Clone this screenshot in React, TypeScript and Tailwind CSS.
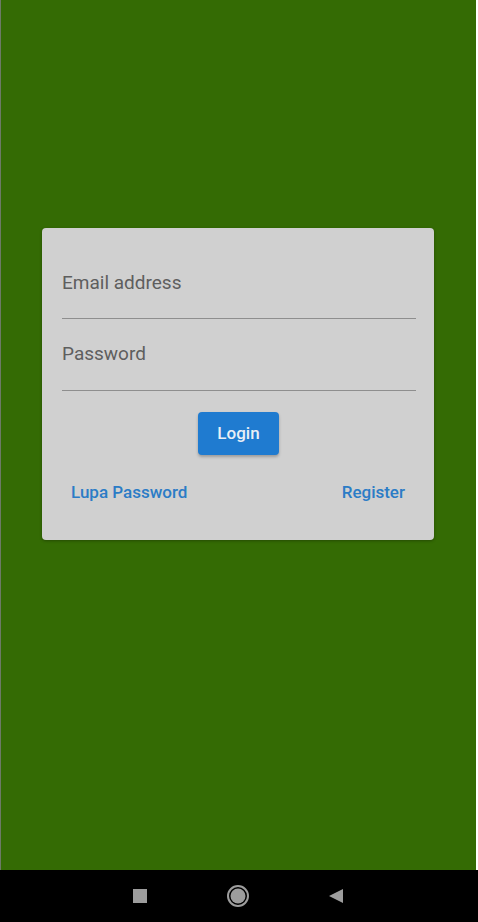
export default function App() {
  return (
    <div className="flex h-[922px] w-[478px] flex-col bg-white font-['Roboto',sans-serif]">
      <div className="mr-[2px] flex flex-1 items-start border-l border-l-[#6d7a66] bg-[#346b04]">
        <div className="ml-[41px] mt-[228px] w-[392px] rounded-[4px] bg-[#d0d0d0] pb-[36px] pl-5 pr-[18px] pt-[43px] shadow-[0_1px_3px_rgba(0,0,0,0.3)]">
          <div className="border-b border-b-[#8e8e8e] pb-[23px]">
            <p className="text-[19px] leading-6 text-[#5e5e5e]">Email address</p>
          </div>
          <div className="mt-[23px] border-b border-b-[#8e8e8e] pb-[24px]">
            <p className="text-[19px] leading-6 text-[#5e5e5e]">Password</p>
          </div>
          <div className="mt-[21px] flex justify-center pr-px">
            <button
              type="button"
              className="h-[43px] w-[81px] rounded-[4px] bg-[#1f7bd0] text-[17px] font-medium text-[#e9eff6] shadow-[0_2px_3px_rgba(0,0,0,0.25)]"
            >
              Login
            </button>
          </div>
          <div className="mt-[25px] flex items-center justify-between pl-[9px] pr-[11px]">
            <button type="button" className="text-[17px] font-medium leading-6 text-[#2b7cc6]">
              Lupa Password
            </button>
            <button type="button" className="text-[17px] font-medium leading-6 text-[#2b7cc6]">
              Register
            </button>
          </div>
        </div>
      </div>
      <div className="flex h-[52px] items-center bg-black pl-[133px]">
        <div className="h-[14px] w-[14px] bg-[#9d9d9d]" />
        <svg width="24" height="24" viewBox="0 0 24 24" className="ml-[79px]">
          <circle cx="12" cy="12" r="10" fill="none" stroke="#9d9d9d" strokeWidth="2" />
          <circle cx="12" cy="12" r="7.5" fill="#9d9d9d" />
        </svg>
        <svg width="16" height="16" viewBox="0 0 16 16" className="ml-[78px]">
          <path d="M15 1 L1 8 L15 15 Z" fill="#9d9d9d" />
        </svg>
      </div>
    </div>
  );
}
